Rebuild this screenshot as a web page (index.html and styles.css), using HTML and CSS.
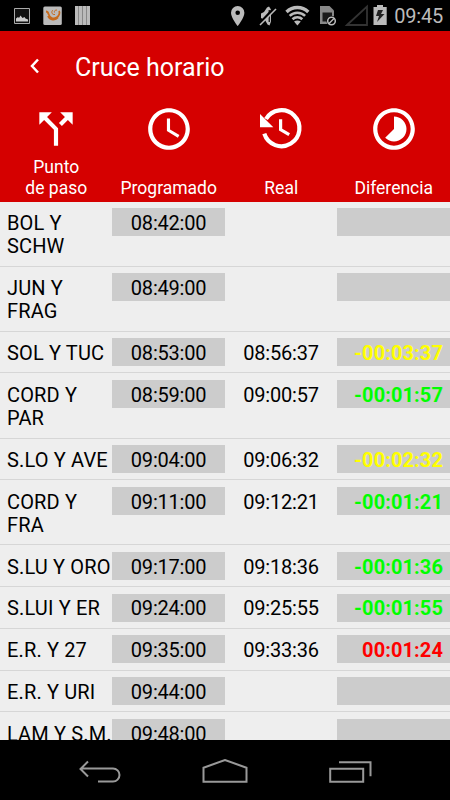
FILE: index.html
```html
<!DOCTYPE html>
<html lang="es">
<head>
    <meta charset="UTF-8">
    <meta name="viewport" content="width=device-width, initial-scale=1.0">
    <title>Cruce horario</title>
    <link rel="stylesheet" href="styles.css">
</head>
<body>
    <div class="status-bar">
        <svg class="status-icons" width="90" height="31" viewBox="0 0 90 31">
            <path d="M14.500 8.500h15v15h-15z" fill="#111" stroke="#aaa"/>
            <path d="M16 21.500v-3l2-1.500 1 1 1.500-2.500 2 2.500 2-1 1 1.500 2.500 1v2z" fill="#ccc"/>
            <rect x="43.300" y="6.500" width="18.500" height="18.500" rx="1.500" fill="#bbb"/>
            <path d="M46 11.500c1 0 2 .5 2.500 2.500 1 4 5 5.500 8 3.500 3-1.500 3.500-5 2.500-6.500M48 16c2 4 7 5 10 1.500" fill="none" stroke="#c66a1c" stroke-width="1.800"/>
            <path d="M53 10c-2 1.500-1.500 5 2 4.500M57 10c-2 0-3 1-2.500 2.500" fill="none" stroke="#c66a1c"/>
            <rect x="75" y="6" width="15" height="19" fill="#bbb"/>
            <path d="M78.500 6v19M82.500 6v19M86.500 6v19" stroke="#888"/>
        </svg>
        <svg class="status-icons" width="164" height="31" viewBox="228 0 164 31">
            <path d="M237.700 6a6.700 6.700 0 0 0-6.700 6.700c0 5 6.700 13.300 6.700 13.300s6.700-8.300 6.700-13.300a6.700 6.700 0 0 0-6.700-6.700zm0 4.400a2.300 2.300 0 1 1 0 4.600 2.300 2.300 0 0 1 0-4.600z" fill="#bbb"/>
            <path d="M261 13.500l3-1.500 3-4.500 2-1 2 3v12l-1.500 4-2-1-2.500-4.500-4-2z" fill="#bbb"/>
            <path d="M269.300 10v12" stroke="#222" stroke-width="1.500"/>
            <path d="M259 24.500L274.500 8" stroke="#000" stroke-width="3"/>
            <path d="M260 25l16-16" stroke="#bbb" stroke-width="1.600"/>
            <path d="M286.500 12a15.500 15.500 0 0 1 21.800 0" fill="none" stroke="#bbb" stroke-width="3.300"/>
            <path d="M289.700 15.900a11 11 0 0 1 15.400 0M292.500 19.300a7 7 0 0 1 9.800 0" fill="none" stroke="#bbb" stroke-width="2.600"/>
            <path d="M294 21.500q3.400-2 6.800 0l-3.400 4z" fill="#bbb"/>
            <path d="M320 6h9.500l4.500 4.500v13.500h-14z" fill="#888"/>
            <path d="M322.500 12.500h9.500v9h-9.500z" fill="#1a1a1a"/>
            <circle cx="331.500" cy="21" r="5" fill="#000"/>
            <circle cx="331.500" cy="21" r="3.800" fill="none" stroke="#bbb" stroke-width="1.500"/>
            <path d="M329 23.500l5-5" stroke="#bbb" stroke-width="1.500"/>
            <path d="M347 25L367 6.500V25z" fill="none" stroke="#333" stroke-width="1.800"/>
            <path d="M373.500 7h3.500V5h6v2h3.700v18h-13.200z" fill="#bbb"/>
            <path d="M378 10h5l-2 4h3.500l-7.500 8 2-6H376z" fill="#222"/>
        </svg>
        <span class="clock">09:45</span>
    </div>

    <header class="header">
        <div class="title-bar">
            <svg class="back" width="12" height="16" viewBox="0 0 12 16"><path d="M10 1.500L4 8l6 6.500" fill="none" stroke="#fff" stroke-width="2.500"/></svg>
            <h1>Cruce horario</h1>
        </div>
        <div class="columns">
            <div class="column">
                <svg viewBox="0 0 24 24"><path d="M14 4l2.290 2.290-2.880 2.880 1.420 1.420 2.880-2.880L20 10V4zm-4 0H4v6l2.290-2.290 4.710 4.700V20h2v-8.410l-5.290-5.300z"/></svg>
                <span>Punto<br>de paso</span>
            </div>
            <div class="column">
                <svg viewBox="0 0 24 24"><path d="M11.990 2C6.470 2 2 6.480 2 12s4.470 10 9.990 10C17.520 22 22 17.520 22 12S17.520 2 11.990 2zM12 20c-4.420 0-8-3.580-8-8s3.580-8 8-8 8 3.580 8 8-3.580 8-8 8zm.5-13H11v6l5.250 3.150.75-1.230-4.500-2.670z"/></svg>
                <span>Programado</span>
            </div>
            <div class="column">
                <svg viewBox="256 104.500 50 50">
                    <path d="M266 119.500A18 18 0 1 1 264.300 134.200" fill="none" stroke="#fff" stroke-width="4.200"/>
                    <path d="M260 114.500l13.300 13.300H260z"/>
                    <path d="M280.600 119.800v10.400l8.600 5" fill="none" stroke="#fff" stroke-width="3.200"/>
                </svg>
                <span>Real</span>
            </div>
            <div class="column">
                <svg viewBox="0 0 24 24"><path d="M16.240 7.760C15.070 6.590 13.540 6 12 6v6l-4.240 4.240c2.340 2.340 6.140 2.340 8.490 0 2.340-2.340 2.340-6.140-.01-8.480zM12 2C6.480 2 2 6.480 2 12s4.480 10 10 10 10-4.480 10-10S17.520 2 12 2zm0 18c-4.420 0-8-3.580-8-8s3.580-8 8-8 8 3.580 8 8-3.580 8-8 8z"/></svg>
                <span>Diferencia</span>
            </div>
        </div>
    </header>

    <main class="list">
        <div class="row tall"><div class="stop">BOL Y<br>SCHW</div><div class="time planned">08:42:00</div><div class="time"></div><div class="diff"></div></div>
        <div class="row tall"><div class="stop">JUN Y<br>FRAG</div><div class="time planned">08:49:00</div><div class="time"></div><div class="diff"></div></div>
        <div class="row"><div class="stop">SOL Y TUC</div><div class="time planned">08:53:00</div><div class="time">08:56:37</div><div class="diff yellow">-00:03:37</div></div>
        <div class="row tall"><div class="stop">CORD Y<br>PAR</div><div class="time planned">08:59:00</div><div class="time">09:00:57</div><div class="diff green">-00:01:57</div></div>
        <div class="row"><div class="stop">S.LO Y AVE</div><div class="time planned">09:04:00</div><div class="time">09:06:32</div><div class="diff yellow">-00:02:32</div></div>
        <div class="row tall"><div class="stop">CORD Y<br>FRA</div><div class="time planned">09:11:00</div><div class="time">09:12:21</div><div class="diff green">-00:01:21</div></div>
        <div class="row"><div class="stop">S.LU Y ORO</div><div class="time planned">09:17:00</div><div class="time">09:18:36</div><div class="diff green">-00:01:36</div></div>
        <div class="row"><div class="stop">S.LUI Y ER</div><div class="time planned">09:24:00</div><div class="time">09:25:55</div><div class="diff green">-00:01:55</div></div>
        <div class="row"><div class="stop">E.R. Y 27</div><div class="time planned">09:35:00</div><div class="time">09:33:36</div><div class="diff red">00:01:24</div></div>
        <div class="row"><div class="stop">E.R. Y URI</div><div class="time planned">09:44:00</div><div class="time"></div><div class="diff"></div></div>
        <div class="row"><div class="stop">LAM Y S.M.</div><div class="time planned">09:48:00</div><div class="time"></div><div class="diff"></div></div>
    </main>

    <nav class="nav-bar">
        <svg width="44" height="26" viewBox="78 759 44 26"><path d="M88 761.500l-7.500 7.500 7.500 7.500M80.500 768.500H113a6.500 6.500 0 0 1 0 13H98"/></svg>
        <svg width="48" height="26" viewBox="201 759 48 26"><path d="M203.500 781.700v-14l21.500-7.700 21.500 7.700v14z"/></svg>
        <svg width="44" height="26" viewBox="329 759 44 26"><path d="M331.200 768.700h33v13h-33zM340 762.300h31.500v14"/></svg>
    </nav>
</body>
</html>
```
FILE: styles.css
```css
* {
    margin: 0;
    padding: 0;
    box-sizing: border-box;
}

body {
    width: 450px;
    height: 800px;
    overflow: hidden;
    display: flex;
    flex-direction: column;
    background: #000;
    font-family: Roboto, sans-serif;
    color: #000;
}

.status-bar {
    height: 31px;
    flex: none;
    display: flex;
    justify-content: space-between;
    align-items: center;
    padding-right: 7px;
    background: #000;
}

.status-icons:first-child {
    margin-right: auto;
}

.clock {
    width: 51px;
    text-align: right;
    font-size: 20px;
    line-height: 31px;
    letter-spacing: -0.2px;
    padding-top: 2px;
    color: #bbb;
}

.header {
    height: 170.5px;
    flex: none;
    background: #d50000;
    color: #fff;
}

.title-bar {
    height: 70px;
    display: flex;
    align-items: center;
    padding-left: 28px;
}

.title-bar h1 {
    margin-left: 35px;
    padding-top: 3px;
    font-size: 25px;
    font-weight: 400;
}

.columns {
    display: flex;
    height: 100px;
}

.column {
    width: 112.5px;
    padding-top: 3px;
    display: flex;
    flex-direction: column;
    align-items: center;
    justify-content: space-between;
    padding-bottom: 3px;
    text-align: center;
    font-size: 17.5px;
    line-height: 20.5px;
}

.column svg {
    width: 50px;
    height: 50px;
    margin-top: -0.5px;
    fill: #fff;
    flex: none;
}

.list {
    height: 538.5px;
    flex: none;
    overflow: hidden;
    background: #eee;
}

.row {
    height: 41.75px;
    display: flex;
    align-items: flex-start;
    padding-top: 6.5px;
    border-bottom: 1px solid #d6d6d6;
    font-size: 20px;
    line-height: 23.4px;
}

.row.tall {
    height: 65.1px;
}

.stop, .time, .diff {
    width: 112.4px;
    height: 28px;
    padding-top: 3.8px;
    white-space: nowrap;
}

.stop {
    padding-left: 7px;
    letter-spacing: 0.15px;
}

.time {
    text-align: center;
    letter-spacing: -0.2px;
}

.planned, .diff {
    background: #ccc;
}

.diff {
    flex: 1;
    padding-right: 7px;
    text-align: right;
    font-weight: 700;
    letter-spacing: 0.1px;
}

.yellow {
    color: #ff0;
}

.green {
    color: #0f0;
}

.red {
    color: #f00;
}

.nav-bar {
    flex: 1;
    display: flex;
    justify-content: space-between;
    padding: 19px 78px 0 78px;
    background: #000;
}

.nav-bar path {
    fill: none;
    stroke: #999;
    stroke-width: 2;
}
```
